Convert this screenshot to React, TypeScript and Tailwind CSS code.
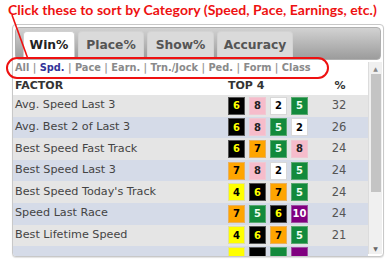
const BOX: Record<string, string> = {
  "2": "bg-white text-black border-[#d8d8d8]",
  "4": "bg-[#ffff00] text-black border-[#e0e0a0]",
  "5": "bg-[#138a3c] text-[#f0fff0] border-[#5aa870]",
  "6": "bg-black text-[#ffff00] border-[#555]",
  "7": "bg-[#ffa500] text-black border-[#e8b060]",
  "8": "bg-[#f6bccb] text-[#222] border-[#f0c8d2]",
  "10": "bg-[#800080] text-white border-[#a050a0]",
};

const rows = [
  { name: "Avg. Speed Last 3", top: ["6", "8", "2", "5"], pct: "32" },
  { name: "Avg. Best 2 of Last 3", top: ["6", "8", "5", "2"], pct: "26" },
  { name: "Best Speed Fast Track", top: ["6", "7", "5", "8"], pct: "24" },
  { name: "Best Speed Last 3", top: ["7", "8", "2", "5"], pct: "24" },
  { name: "Best Speed Today's Track", top: ["4", "6", "7", "5"], pct: "24" },
  { name: "Speed Last Race", top: ["7", "5", "6", "10"], pct: "24" },
  { name: "Best Lifetime Speed", top: ["4", "6", "7", "5"], pct: "21" },
];

// partly scrolled-out row at the bottom: only its colours peek through
const lastRow = ["4", "6", "5", "10"];

const tabs = [
  { label: "Win%", w: "w-[52px]", active: true },
  { label: "Place%", w: "w-[66px]", active: false },
  { label: "Show%", w: "w-[67px]", active: false },
  { label: "Accuracy", w: "w-[76px]", active: false },
];

const cats = ["All", "Spd.", "Pace", "Earn.", "Trn./Jock", "Ped.", "Form", "Class"];

export default function App() {
  return (
    <div className="relative w-[388px] h-[260px] bg-white overflow-hidden font-['DejaVu_Sans',sans-serif]">
      <div className="h-[20px] pl-[8px] pt-[1px] font-['Lato',sans-serif] font-bold text-[14px] tracking-[0.05px] leading-[17px] text-[#ee1111] whitespace-nowrap">
        Click these to sort by Category (Speed, Pace, Earnings, etc.)
      </div>

      <div className="ml-[12px] mt-[4px] w-[372px] h-[233px] border border-[#c8c8c8] rounded-[4px] bg-white flex flex-col overflow-hidden shadow-[0_1px_1px_rgba(0,0,0,0.12)]">
        <div className="mx-[2px] mt-[2px] h-[33px] rounded-[4px] border border-[#b0b0b0] bg-gradient-to-b from-[#d2d2d2] to-[#9c9c9c] flex items-end gap-[3px] pl-[7px]">
          {tabs.map((t) => (
            <div
              key={t.label}
              className={`${t.w} h-[28px] rounded-t-[4px] border border-b-0 flex items-center justify-center font-bold text-[12.3px] ${
                t.active
                  ? "bg-white border-[#d0d0d0] text-[#222]"
                  : "bg-[#dadada] border-[#d3d3d3] text-[#555]"
              }`}
            >
              {t.label}
            </div>
          ))}
        </div>

        <div className="flex flex-1 min-h-0">
          <div className="flex-1 min-w-0 overflow-hidden">
            <div className="h-[17px] pl-[2px] flex items-center font-bold text-[9.8px] text-[#8a8a8a] whitespace-nowrap">
              {cats.map((c, i) => (
                <span key={c}>
                  {i > 0 && <span className="text-[#999]">&nbsp;|&nbsp;</span>}
                  <span className={c === "Spd." ? "text-[#333399]" : ""}>{c}</span>
                </span>
              ))}
            </div>
            <div className="h-[18px] flex items-center font-bold text-[11px] text-[#333]">
              <div className="w-[215px] pl-[2px]">FACTOR</div>
              <div className="w-[81px]">TOP 4</div>
              <div className="flex-1 text-center pl-[3px]">%</div>
            </div>
            {rows.map((r, i) => (
              <div
                key={r.name}
                className={`h-[21.6px] flex items-center ${i % 2 === 0 ? "bg-[#e5e5e5]" : "bg-[#d5dbe8]"}`}
              >
                <div className="w-[215px] pl-[2px] text-[11.2px] text-[#444] whitespace-nowrap">{r.name}</div>
                <div className="w-[81px] flex gap-[4px]">
                  {r.top.map((n, j) => (
                    <div
                      key={j}
                      className={`w-[17px] h-[18px] border flex items-center justify-center font-bold text-[10px] ${BOX[n]}`}
                    >
                      {n}
                    </div>
                  ))}
                </div>
                <div className="flex-1 text-center pl-[1px] text-[11.5px] text-[#555]">{r.pct}</div>
              </div>
            ))}
            <div className="h-[21.6px] flex items-start bg-[#d5dbe8] pt-[1px]">
              <div className="w-[215px]" />
              <div className="w-[81px] flex gap-[4px]">
                {lastRow.map((n, j) => (
                  <div key={j} className={`w-[17px] h-[18px] border ${BOX[n]}`} />
                ))}
              </div>
            </div>
          </div>

          <div className="w-[14px] mr-[1px] mb-[2px] mt-[2px] bg-[#f0f0f0] border-l border-[#dcdcdc] flex flex-col items-center">
            <div className="h-[12px] flex items-center justify-center text-[6px] text-[#888]">▲</div>
            <div className="w-[10px] h-[118px] bg-[#c4c4c4]" />
            <div className="flex-1" />
            <div className="h-[12px] flex items-center justify-center text-[6px] text-[#666]">▼</div>
          </div>
        </div>
      </div>

      <svg className="absolute left-0 top-0 pointer-events-none" width="388" height="260">
        <line x1="12" y1="15" x2="28" y2="59" stroke="#ee1111" strokeWidth="1.6" />
        <rect x="7" y="58" width="321" height="20" rx="10" fill="none" stroke="#ee1111" strokeWidth="2" />
      </svg>
    </div>
  );
}
